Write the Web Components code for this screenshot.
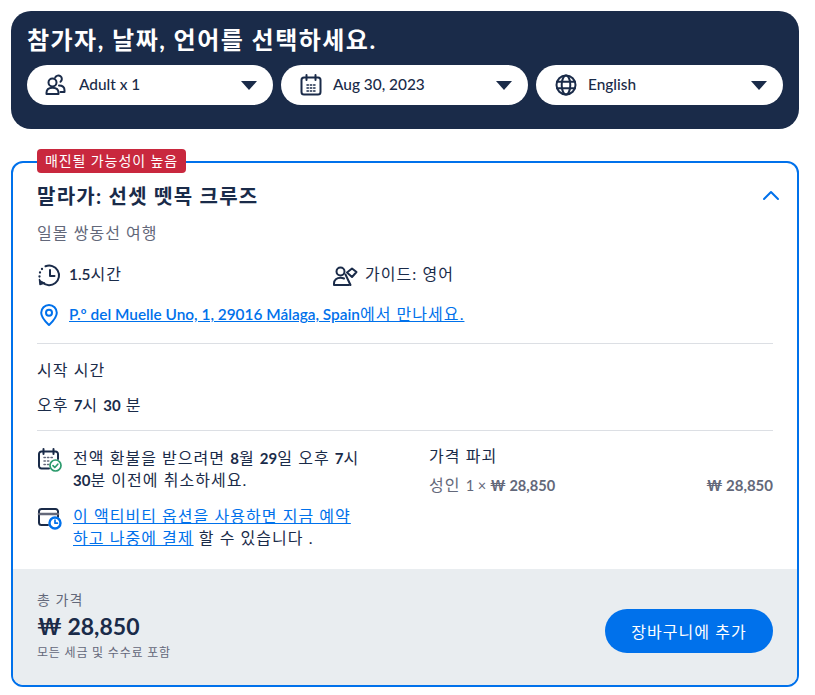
<!DOCTYPE html>
<html lang="ko">
<head>
<meta charset="utf-8">
<title>Activity options</title>
<style>
  body { margin: 0; padding: 11px 16px 8px 11px; background: #fff; color: #1a2b49; font-family: Lato, "Noto Sans CJK KR", sans-serif; font-size: 16px; letter-spacing: 1.04px; }
</style>
</head>
<body>
<booking-app></booking-app>

<script>
// all the icons in one place, 24x24 box
const ICONS = {
  people: `<path d="M7.500 5.500a4 4 0 1 1 0 8 4 4 0 0 1 0-8z"/><path d="M1.500 21v-1.300c0-3.200 2.600-5 6-5s6 1.800 6 5V21z"/><path d="M10.200 4.500a3.500 3.500 0 1 1 5.300 4.300M14 12.500c3.200 0 5.500 1.700 5.500 4.700V19h-4"/>`,
  calendar: `<rect x="2.500" y="4.500" width="19" height="17" rx="2.500"/><path d="M7.500 2v5M16.500 2v5"/><path d="M8 12h1.400M11.300 12h1.400M14.600 12h1.400M8 15h1.400M11.300 15h1.400M14.600 15h1.400M8 18h1.400M11.300 18h1.400M14.600 18h1.400" stroke-width="1.500"/>`,
  globe: `<circle cx="12" cy="12" r="9.500"/><ellipse cx="12" cy="12" rx="4.300" ry="9.500"/><path d="M3.200 8.700h17.600M3.200 15.300h17.600"/>`,
  history: `<path d="M8.500 3.300A9.800 9.800 0 1 1 5.500 19.500"/><path d="M13 7v6h4.500"/><path d="M2.500 13.500v.1M3 9.500v.1M5 6v.1" stroke-width="2.300"/><path d="M2.500 16.500l.5 5 4.500-1.500" fill="currentColor" stroke-width="1.500"/>`,
  guide: `<path d="M7.500 4.500a4 4 0 1 1 0 8 4 4 0 0 1 0-8z"/><path d="M1 22v-1.500c0-3.700 2.800-5.800 6.500-5.800 1.300 0 2.500.3 3.500.8M1 22h15"/><path d="M14 9.500l5-4 4.500 3.500-4.500 5z"/><path d="M12.500 11.500l5 10.500"/>`,
  pin: `<path d="M12 2a7.800 7.800 0 0 0-7.800 7.800c0 5.200 5.400 9.900 7.800 12.200 2.400-2.300 7.800-7 7.800-12.200A7.800 7.800 0 0 0 12 2z"/><circle cx="12" cy="9.800" r="3"/>`,
  chevron: `<path d="M5 15l7-7 7 7"/>`,
  freeCancel: `<path d="M21 12V7a2.500 2.500 0 0 0-2.500-2.500h-14A2.500 2.500 0 0 0 2 7v12a2.500 2.500 0 0 0 2.500 2.500H12"/><path d="M6.500 2v5M16.500 2v5"/><path d="M7 10.500h1.300M10.500 10.500h1.300M14 10.500h1.300M7 14h1.300M10.500 14h1.300M7 17.500h1.300M10.500 17.500h1.300" stroke-width="1.500" stroke="#63687a"/><circle cx="18.500" cy="18.500" r="5.500" fill="#fff" stroke="#2b9a6c" stroke-width="1.700"/><path d="M16 18.700l1.800 1.800 3-3.300" stroke="#2b9a6c" stroke-width="1.700"/>`,
  payLater: `<path d="M11 20H4.500A2.500 2.500 0 0 1 2 17.500v-11A2.500 2.500 0 0 1 4.500 4h14A2.500 2.500 0 0 1 21 6.500V12"/><path d="M2 9h19" stroke-width="2.600" stroke="#63687a"/><circle cx="18" cy="18" r="5.500" fill="#fff" stroke="#0071eb" stroke-width="2.400"/><path d="M18 15.200v3h2.400" stroke="#0071eb" stroke-width="1.700"/>`
};

class UiIcon extends HTMLElement {
  constructor() {
    super();
    const shadow = this.attachShadow({ mode: 'open' });
    const size = this.getAttribute('size') || 24;
    const stroke = this.getAttribute('stroke') || 2;
    shadow.innerHTML = `
      <style>
        :host { display: inline-flex; flex: none; width: ${size}px; height: ${size}px; }
        svg { display: block; width: 100%; height: 100%; overflow: visible; }
      </style>
      <svg viewBox="0 0 24 24" fill="none" stroke="currentColor" stroke-width="${stroke}" stroke-linecap="round" stroke-linejoin="round">${ICONS[this.getAttribute('name')] || ''}</svg>`;
  }
}
customElements.define('ui-icon', UiIcon);

// white rounded select in the dark banner
class FilterPill extends HTMLElement {
  constructor() {
    super();
    const shadow = this.attachShadow({ mode: 'open' });
    shadow.innerHTML = `
      <style>
        :host { display: flex; flex: 1 1 0; min-width: 0; align-items: center; height: 40px; padding: 0 16px 0 18px; box-sizing: border-box; background: #fff; border-radius: 20px; color: #1a2b49; font-size: 15.4px; font-weight: 500; letter-spacing: 0; }
        .label { flex: 1; margin-left: 10px; position: relative; top: -1px; }
        .caret { width: 0; height: 0; border-left: 8.5px solid transparent; border-right: 8.5px solid transparent; border-top: 9px solid #1a2b49; }
      </style>
      <ui-icon name="${this.getAttribute('icon')}"></ui-icon>
      <span class="label"><slot></slot></span>
      <span class="caret"></span>`;
  }
}
customElements.define('filter-pill', FilterPill);

class FilterBanner extends HTMLElement {
  constructor() {
    super();
    const shadow = this.attachShadow({ mode: 'open' });
    shadow.innerHTML = `
      <style>
        :host { display: block; box-sizing: border-box; width: 788px; height: 118px; padding: 11px 16px 0; background: #1a2b49; border-radius: 20px; color: #fff; }
        h2 { margin: 0 0 7px; font-size: 24px; line-height: 36px; height: 36px; font-weight: 700; letter-spacing: 1.48px; }
        .pills { display: flex; gap: 8px; }
      </style>
      <h2><slot name="title"></slot></h2>
      <div class="pills"><slot></slot></div>`;
  }
}
customElements.define('filter-banner', FilterBanner);

// small row: icon then text
class IconLine extends HTMLElement {
  constructor() {
    super();
    const shadow = this.attachShadow({ mode: 'open' });
    shadow.innerHTML = `
      <style>
        :host { display: flex; align-items: flex-start; gap: var(--line-gap, 8px); line-height: 22px; }
        .txt { display: block; }
      </style>
      <ui-icon name="${this.getAttribute('icon')}" style="color:${this.getAttribute('color') || '#1a2b49'}"></ui-icon>
      <span class="txt"><slot></slot></span>`;
  }
}
customElements.define('icon-line', IconLine);

class OptionCard extends HTMLElement {
  constructor() {
    super();
    const shadow = this.attachShadow({ mode: 'open' });
    shadow.innerHTML = `
      <style>
        :host { display: block; position: relative; box-sizing: border-box; width: 788px; height: 526px; margin-top: 32px; border: 2px solid #0071eb; border-radius: 12px; background: #fff; }
        .badge { position: absolute; left: 24px; top: -14px; height: 24px; line-height: 24px; padding: 0 8px; background: #c9283e; color: #fff; font-size: 14px; letter-spacing: .9px; border-radius: 4px; }
        .frame { display: flex; flex-direction: column; height: 100%; border-radius: 10px; overflow: hidden; }
        .body { flex: 1; padding: 18px 24px 0; }
        .head { display: flex; justify-content: space-between; align-items: center; height: 30px; }
        h3 { margin: 0; font-size: 20px; font-weight: 700; line-height: 30px; letter-spacing: 1.27px; }
        .chev { color: #0071eb; margin-right: -10px; }
        .sub { margin-top: 10px; line-height: 24px; color: #63687a; }
        .facts { display: grid; grid-template-columns: 296px 1fr; margin-top: 18px; height: 24px; align-items: center; }
        .place { margin-top: 16px; height: 24px; }
        hr { border: 0; border-top: 1px solid #dcdfe4; margin: 0; }
        .start { margin-top: 14px; }
        .start div { line-height: 24px; }
        .start div + div { margin-top: 11px; }
        .lower { display: grid; grid-template-columns: 392px 1fr; margin-top: 16px; }
        .notes { display: flex; flex-direction: column; gap: 14px; width: 326px; }
        .prices { margin-top: -2px; }
        .price-title { line-height: 22px; }
        .price-row { display: flex; justify-content: space-between; margin-top: 7px; line-height: 22px; color: #63687a; }
        .price-row b { font-size: 15px; font-weight: 700; letter-spacing: 0; }
        .foot { display: flex; justify-content: space-between; align-items: center; height: 116px; padding: 0 24px; box-sizing: border-box; background: #e9edf0; }
        .total { padding-bottom: 2px; }
        .foot .a { font-size: 14px; line-height: 20px; color: #63687a; }
        .foot .b { font-size: 23px; font-weight: 700; line-height: 30px; margin-top: 1px; letter-spacing: 0; }
        .foot .c { font-size: 12px; line-height: 18px; color: #63687a; margin-top: 3px; letter-spacing: .8px; }
        button { width: 168px; height: 44px; margin-top: 7px; border: 0; border-radius: 22px; background: #0071eb; color: #fff; font: inherit; letter-spacing: inherit; }
      </style>
      <div class="badge"><slot name="badge"></slot></div>
      <div class="frame">
        <div class="body">
          <div class="head">
            <h3><slot name="title"></slot></h3>
            <ui-icon class="chev" name="chevron"></ui-icon>
          </div>
          <div class="sub"><slot name="sub"></slot></div>
          <div class="facts"><slot name="facts"></slot></div>
          <div class="place"><slot name="place"></slot></div>
          <hr style="margin-top:16px">
          <div class="start">
            <div><slot name="start-label"></slot></div>
            <div><slot name="start-time"></slot></div>
          </div>
          <hr style="margin-top:13px">
          <div class="lower">
            <div class="notes"><slot name="notes"></slot></div>
            <div class="prices">
              <div class="price-title"><slot name="price-title"></slot></div>
              <div class="price-row"><span><slot name="price-unit"></slot></span><b><slot name="price-sum"></slot></b></div>
            </div>
          </div>
        </div>
        <div class="foot">
          <div class="total">
            <div class="a">총 가격</div>
            <div class="b"><slot name="total"></slot></div>
            <div class="c">모든 세금 및 수수료 포함</div>
          </div>
          <button>장바구니에 추가</button>
        </div>
      </div>`;
  }
}
customElements.define('option-card', OptionCard);

class BookingApp extends HTMLElement {
  constructor() {
    super();
    const shadow = this.attachShadow({ mode: 'open' });
    shadow.innerHTML = `
      <style>
        :host { display: block; }
        a { color: #0071eb; }
        .lat { letter-spacing: 0; font-size: 15.400px; font-weight: 600; }
        .dig { letter-spacing: 0; font-size: 15px; font-weight: 700; }
        .unit { letter-spacing: 0; font-size: 14.600px; }
        .unit b { font-weight: 700; }
      </style>
      <filter-banner>
        <span slot="title">참가자, 날짜, 언어를 선택하세요.</span>
        <filter-pill icon="people" style="flex:0 0 246px">Adult x 1</filter-pill>
        <filter-pill icon="calendar">Aug 30, 2023</filter-pill>
        <filter-pill icon="globe">English</filter-pill>
      </filter-banner>
      <option-card>
        <span slot="badge">매진될 가능성이 높음</span>
        <span slot="title">말라가: 선셋 뗏목 크루즈</span>
        <span slot="sub">일몰 쌍동선 여행</span>
        <icon-line slot="facts" icon="history"><span class="lat">1.5</span>시간</icon-line>
        <icon-line slot="facts" icon="guide">가이드: 영어</icon-line>
        <icon-line slot="place" icon="pin" color="#0071eb"><a href="#"><span class="lat">P.º del Muelle Uno, 1, 29016 Málaga, Spain</span>에서 만나세요.</a></icon-line>
        <span slot="start-label">시작 시간</span>
        <span slot="start-time">오후 <span class="dig">7</span>시 <span class="dig">30</span> 분</span>
        <icon-line slot="notes" icon="freeCancel" style="--line-gap:12px">전액 환불을 받으려면 <span class="dig">8</span>월 <span class="dig">29</span>일 오후 <span class="dig">7</span>시<br><span class="dig">30</span>분 이전에 취소하세요.</icon-line>
        <icon-line slot="notes" icon="payLater" style="--line-gap:12px"><a href="#">이 액티비티 옵션을 사용하면 지금 예약</a><br><a href="#">하고 나중에 결제</a> 할 수 있습니다 .</icon-line>
        <span slot="price-title">가격 파괴</span>
        <span slot="price-unit">성인 <span class="unit">1 × <b>₩ 28,850</b></span></span>
        <span slot="price-sum">₩ 28,850</span>
        <span slot="total">₩ 28,850</span>
      </option-card>`;
  }
}
customElements.define('booking-app', BookingApp);
</script>
</body>
</html>
